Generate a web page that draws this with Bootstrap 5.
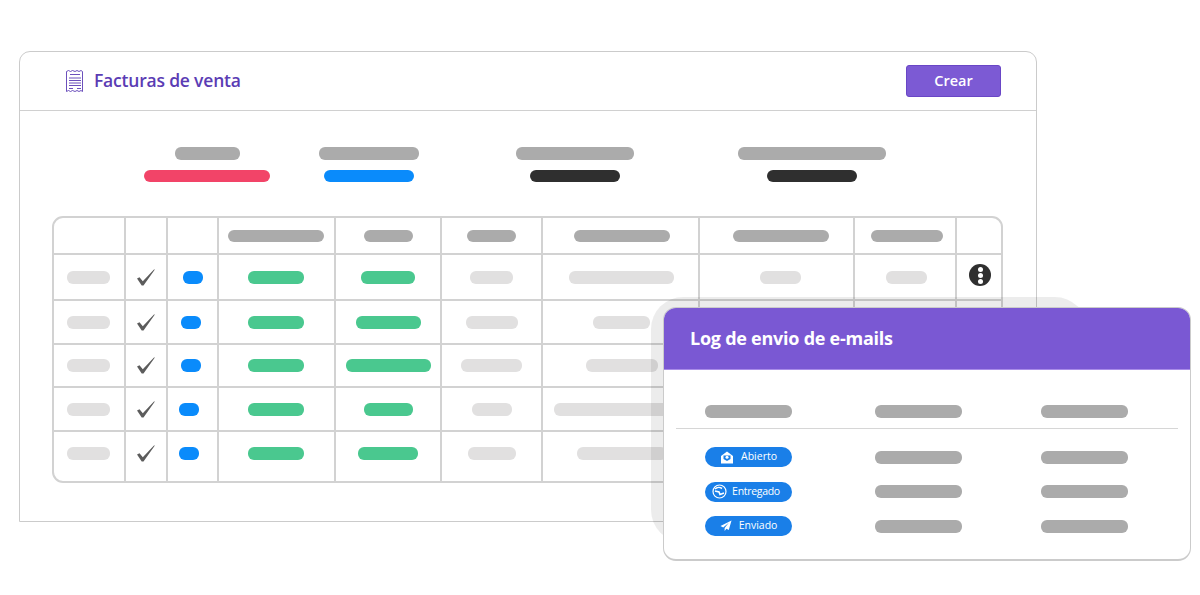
<!DOCTYPE html>
<html lang="es">
<head>
  <meta charset="UTF-8" />
  <title>Facturas de venta</title>
  <link href="https://cdn.jsdelivr.net/npm/bootstrap@5.3.0/dist/css/bootstrap.min.css" rel="stylesheet" />
  <style>
    body { margin: 0; background: #fff; font-family: "Open Sans", "Liberation Sans", sans-serif; }
    .stage { position: relative; width: 1200px; height: 595px; overflow: hidden; padding: 51px 0 0 19px; }

    /* main window */
    .app-window { width: 1018px; height: 471px; border: 1px solid #cbcbcb; border-radius: 11px 11px 0 0; background: #fff; }
    .app-head { height: 59px; border-bottom: 1px solid #d0d0d0; padding: 0 35px 0 46px; }
    .app-title { font-size: 17.5px; font-weight: 600; color: #5b3cb4; letter-spacing: -.2px; margin: 0 0 2px 10px; }
    .btn-crear { width: 95px; height: 32px; padding: 0; background: #7c5ad4; border: 1px solid #6946c6; border-radius: 3px; color: #fff; font-size: 14.5px; font-weight: 600; }

    .summary { display: grid; grid-template-columns: 126px 198px 214px 260px; margin: 36px 0 34px 124px; }
    .sum-col { gap: 10px; }
    .bar { display: block; height: 13px; border-radius: 6px; }
    .bar-gray { background: #ababab; }
    .bar-soft { background: #e1e0e0; }
    .bar-green { background: #4ac88f; }
    .bar-blue { background: #0a8bfb; }
    .bar-red { background: #f24468; }
    .bar-dark { background: #2f2f2f; }
    .bar-sm { height: 12px; }
    .nudge { margin-right: 2px; }
    .nudge-r { margin-left: 2px; }

    /* invoices grid */
    .grid-wrap { width: 951px; margin-left: 32px; border: 2px solid #d2d2d2; border-radius: 11px; overflow: hidden; }
    .grid-table { width: 949px; table-layout: fixed; border-collapse: collapse; border-style: hidden; }
    .grid-table td { border: 2px solid #d2d2d2; padding: 0; vertical-align: middle; }
    .grid-table tr { height: 44px; }
    .grid-table tr.row-top { height: 36px; }
    .grid-table tr.row-first { height: 46px; }
    .grid-table tr.row-short { height: 43px; }
    .grid-table tr.row-last { height: 50px; }
    .grid-table tr.row-last td { padding-bottom: 6px; }
    .dots { width: 22px; height: 22px; border-radius: 50%; background: #2f2f2f; gap: 1px; margin-bottom: 4px; }
    .dots i { display: block; width: 5px; height: 5px; border-radius: 50%; background: #fff; }

    /* popup */
    .halo { position: absolute; left: 651px; top: 297px; width: 436px; height: 245px; border-radius: 32px; background: rgba(0, 0, 0, .075); }
    .mail-card { position: absolute; left: 663px; top: 307px; width: 528px; height: 254px; background: #fff; border: 1px solid #cbcbcb; border-bottom-width: 2px; border-radius: 13px; overflow: hidden; }
    .mail-head { height: 62px; background: #7a58d3; padding-left: 26px; border-bottom: 1px solid #a98ce8; }
    .mail-head h2 { font-size: 18px; font-weight: 700; color: #fff; margin: 0; letter-spacing: -.25px; }
    .mail-row { display: grid; grid-template-columns: 170px 166px 87px; padding-left: 41px; align-items: center; }
    .mail-top { padding-top: 35px; padding-bottom: 10px; }
    .mail-line { margin: 0 12px 0 12px; border-bottom: 1.5px solid #d6d6d6; }
    .mail-row.mail-item { height: 34.5px; }
    .mail-rows { padding-top: 11px; }
    .mail-badge { width: 87px; height: 20px; border-radius: 10px; background: #1a7fe8; color: #fff; font-size: 10.5px; gap: 7px; }
    .mail-badge.badge-tight { gap: 5px; letter-spacing: -.3px; padding-right: 5px; }
  </style>
</head>
<body>
<div class="stage">

  <!-- Main window -->
  <div class="app-window">
    <div class="app-head d-flex align-items-center">
      <svg width="18" height="23" viewBox="0 0 18 23" fill="none" stroke="#5b3cb4" stroke-width=".9">
        <path d="M.5 1.500l2-1 2 1 2-1 2.500 1 2-1 2 1 2-1 1.500 1v20l-1.500-1-2 1-2-1-2 1-2.500-1-2 1-2-1-2 1z" />
        <path d="M4 4.500h10M3 8h12M3 10.500h12M3 13h12M3 15.500h12M3 18.500h4M11 18.500h4" />
      </svg>
      <h1 class="app-title">Facturas de venta</h1>
      <button type="button" class="btn btn-crear ms-auto">Crear</button>
    </div>

    <div class="summary">
      <div class="sum-col d-flex flex-column align-items-center"><span class="bar bar-gray" style="width:65px"></span><span class="bar bar-red bar-sm" style="width:126px"></span></div>
      <div class="sum-col d-flex flex-column align-items-center"><span class="bar bar-gray" style="width:100px"></span><span class="bar bar-blue bar-sm" style="width:90px"></span></div>
      <div class="sum-col d-flex flex-column align-items-center"><span class="bar bar-gray" style="width:118px"></span><span class="bar bar-dark bar-sm" style="width:90px"></span></div>
      <div class="sum-col d-flex flex-column align-items-center"><span class="bar bar-gray" style="width:148px"></span><span class="bar bar-dark bar-sm" style="width:90px"></span></div>
    </div>

    <div class="grid-wrap">
      <table class="grid-table">
        <colgroup>
          <col style="width:71px" /><col style="width:42px" /><col style="width:51px" /><col style="width:117px" /><col style="width:106px" />
          <col style="width:101px" /><col style="width:157px" /><col style="width:155px" /><col style="width:102px" /><col style="width:47px" />
        </colgroup>
        <tbody id="gridBody"></tbody>
      </table>
    </div>
  </div>

  <div class="halo"></div>

  <!-- E-mail log -->
  <div class="mail-card">
    <div class="mail-head d-flex align-items-center"><h2>Log de envio de e-mails</h2></div>
    <div class="mail-row mail-top">
      <span class="bar bar-gray" style="width:87px"></span><span class="bar bar-gray" style="width:87px"></span><span class="bar bar-gray" style="width:87px"></span>
    </div>
    <div class="mail-line"></div>
    <div class="mail-rows">
      <div class="mail-row mail-item">
        <span class="mail-badge d-flex align-items-center justify-content-center">
          <svg width="14" height="13" viewBox="0 0 13 13"><path fill="#fff" d="M6.500.5L12.500 5v7.500H.5V5z"/><path fill="#1a7fe8" d="M3 4.500h7V8L6.500 10 3 8z"/><circle cx="6.500" cy="6.300" r="1.500" fill="#fff"/></svg>
          Abierto
        </span>
        <span class="bar bar-gray" style="width:87px"></span><span class="bar bar-gray" style="width:87px"></span>
      </div>
      <div class="mail-row mail-item">
        <span class="mail-badge badge-tight d-flex align-items-center justify-content-center">
          <svg width="15" height="15" viewBox="0 0 15 15" fill="none" stroke="#fff"><circle cx="7.500" cy="7.500" r="6.500" stroke-width="1.200"/><path stroke-width="1.600" d="M3 5c2-2 5-2 7-.5M3 7l4 1 1 2.500 4-1.500"/></svg>
          Entregado
        </span>
        <span class="bar bar-gray" style="width:87px"></span><span class="bar bar-gray" style="width:87px"></span>
      </div>
      <div class="mail-row mail-item">
        <span class="mail-badge d-flex align-items-center justify-content-center">
          <svg width="12" height="12" viewBox="0 0 13 13"><path fill="#fff" d="M12.500.5L.5 6.500l3 1.500 6-5-4.500 5.800v3l2-2.300 2.500 1.200z"/></svg>
          Enviado
        </span>
        <span class="bar bar-gray" style="width:87px"></span><span class="bar bar-gray" style="width:87px"></span>
      </div>
    </div>
  </div>
</div>

<script src="https://cdn.jsdelivr.net/npm/bootstrap@5.3.0/dist/js/bootstrap.bundle.min.js"></script>
<script>
  // Widths of the placeholder bars per row: green, col 6, col 7
  const rows = [
    { blue: "", green: 54, a: 43, b: 105, dots: true, cls: "row-first" },
    { blue: "me-1", green: 65, a: 52, b: 57, cls: "" },
    { blue: "me-1", green: 85, a: 61, b: 72, cls: "row-short" },
    { blue: "me-2", green: 49, a: 40, b: 135, cls: "" },
    { blue: "me-2", green: 60, a: 48, b: 90, cls: "row-last" }
  ];
  const checkIcon = '<svg width="18" height="17" viewBox="0 0 18 17"><path fill="#5c5c5c" d="M0 9.500l2.500-1.300 3.300 4L17.200.3l.5.400L6.500 16.500h-1.800z"/></svg>';
  const cell = (html) => '<td><div class="d-flex justify-content-center align-items-center">' + html + "</div></td>";
  const bar = (color, w, extra) => '<span class="bar bar-' + color + " " + (extra || "") + '" style="width:' + w + 'px"></span>';

  let html = '<tr class="row-top"><td></td><td></td><td></td>';
  [[96, "nudge"], [49, ""], [49, ""], [96, "nudge-r"], [96, "ms-2"], [72, "ms-1"]].forEach(([w, extra]) => { html += cell(bar("gray", w, "bar-sm " + extra)); });
  html += "<td></td></tr>";

  rows.forEach((r) => {
    html += '<tr class="' + r.cls + '">';
    html += cell(bar("soft", 43, "nudge"));
    html += cell(checkIcon);
    html += cell(bar("blue", 20, r.blue));
    html += cell(bar("green", 56, "nudge"));
    html += cell(bar("green", r.green));
    html += cell(bar("soft", r.a));
    html += cell(bar("soft", r.b, "nudge-r"));
    html += cell(bar("soft", 41, "ms-2"));
    html += cell(bar("soft", 41, "nudge-r"));
    html += cell(r.dots ? '<span class="dots d-flex flex-column align-items-center justify-content-center"><i></i><i></i><i></i></span>' : "");
    html += "</tr>";
  });
  document.getElementById("gridBody").innerHTML = html;
</script>
</body>
</html>
